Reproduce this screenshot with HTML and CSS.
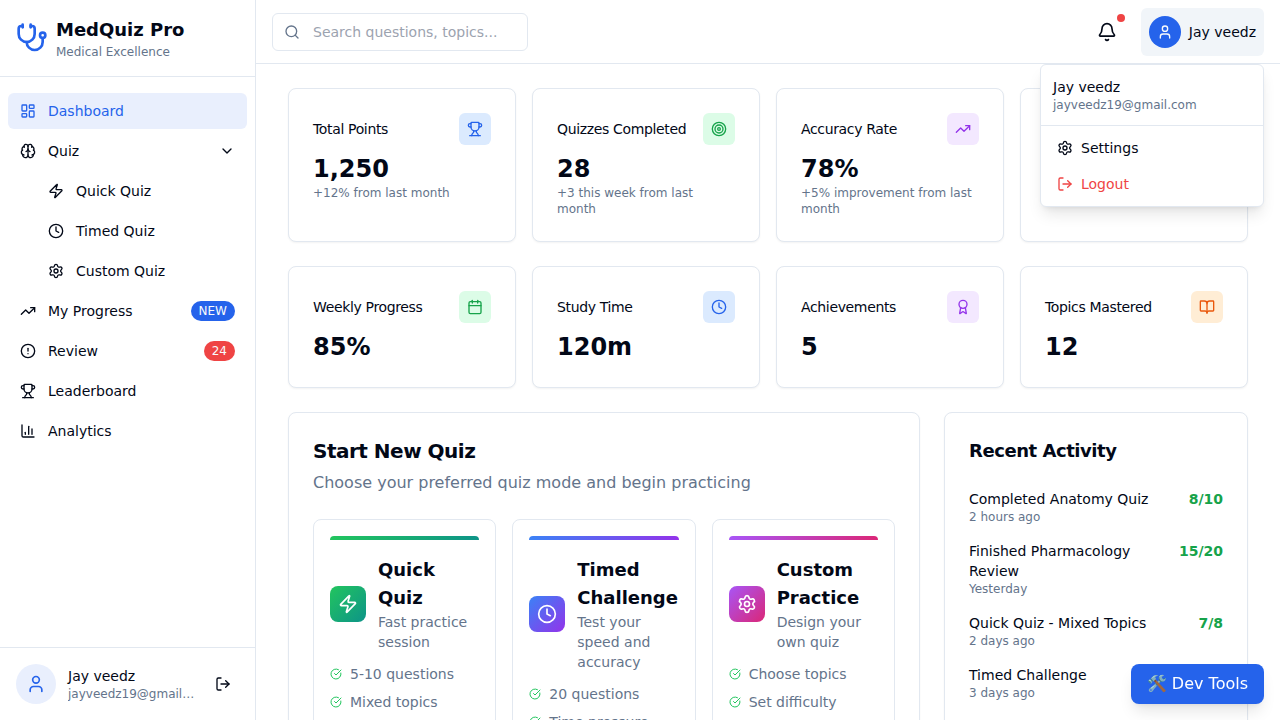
FILE: index.html
```html
<!DOCTYPE html>
<html lang="en">
<head>
<meta charset="utf-8">
<title>MedQuiz Pro</title>
<link rel="stylesheet" href="styles.css">
</head>
<body>
<svg class="sprite" aria-hidden="true">
  <symbol id="stethoscope" viewBox="0 0 24 24"><path d="M11 2v2"/><path d="M5 2v2"/><path d="M5 3H4a2 2 0 0 0-2 2v4a6 6 0 0 0 12 0V5a2 2 0 0 0-2-2h-1"/><path d="M8 15a6 6 0 0 0 12 0v-3"/><circle cx="20" cy="10" r="2"/></symbol>
  <symbol id="dashboard" viewBox="0 0 24 24"><rect width="7" height="9" x="3" y="3" rx="1"/><rect width="7" height="5" x="14" y="3" rx="1"/><rect width="7" height="9" x="14" y="12" rx="1"/><rect width="7" height="5" x="3" y="16" rx="1"/></symbol>
  <symbol id="brain" viewBox="0 0 24 24"><path d="M12 18V5"/><path d="M15 13a4.17 4.17 0 0 1-3-4 4.17 4.17 0 0 1-3 4"/><path d="M17.598 6.5A3 3 0 1 0 12 5a3 3 0 1 0-5.598 1.5"/><path d="M17.997 5.125a4 4 0 0 1 2.526 5.77"/><path d="M18 18a4 4 0 0 0 2-7.464"/><path d="M19.967 17.483A4 4 0 1 1 12 18a4 4 0 1 1-7.967-.517"/><path d="M6 18a4 4 0 0 1-2-7.464"/><path d="M6.003 5.125a4 4 0 0 0-2.526 5.77"/></symbol>
  <symbol id="chevron" viewBox="0 0 24 24"><path d="m6 9 6 6 6-6"/></symbol>
  <symbol id="zap" viewBox="0 0 24 24"><path d="M4 14a1 1 0 0 1-.78-1.63l9.9-10.2a.5.5 0 0 1 .86.46l-1.92 6.02A1 1 0 0 0 13 10h7a1 1 0 0 1 .78 1.63l-9.9 10.2a.5.5 0 0 1-.86-.46l1.92-6.02A1 1 0 0 0 11 14z"/></symbol>
  <symbol id="clock" viewBox="0 0 24 24"><path d="M12 6v6l4 2"/><circle cx="12" cy="12" r="10"/></symbol>
  <symbol id="settings" viewBox="0 0 24 24"><path d="M9.671 4.136a2.34 2.34 0 0 1 4.659 0 2.34 2.34 0 0 0 3.319 1.915 2.34 2.34 0 0 1 2.33 4.033 2.34 2.34 0 0 0 0 3.831 2.34 2.34 0 0 1-2.33 4.033 2.34 2.34 0 0 0-3.319 1.915 2.34 2.34 0 0 1-4.659 0 2.34 2.34 0 0 0-3.32-1.915 2.34 2.34 0 0 1-2.33-4.033 2.34 2.34 0 0 0 0-3.831A2.34 2.34 0 0 1 6.35 6.051a2.34 2.34 0 0 0 3.319-1.915"/><circle cx="12" cy="12" r="3"/></symbol>
  <symbol id="trending" viewBox="0 0 24 24"><path d="M16 7h6v6"/><path d="m22 7-8.5 8.5-5-5L2 17"/></symbol>
  <symbol id="alert" viewBox="0 0 24 24"><circle cx="12" cy="12" r="10"/><path d="M12 8v4"/><path d="M12 16h.01"/></symbol>
  <symbol id="trophy" viewBox="0 0 24 24"><path d="M10 14.66v1.626a2 2 0 0 1-.976 1.696A5 5 0 0 0 7 21.978"/><path d="M14 14.66v1.626a2 2 0 0 0 .976 1.696A5 5 0 0 1 17 21.978"/><path d="M18 9h1.5a1 1 0 0 0 0-5H18"/><path d="M4 22h16"/><path d="M6 9a6 6 0 0 0 12 0V3a1 1 0 0 0-1-1H7a1 1 0 0 0-1 1z"/><path d="M6 9H4.5a1 1 0 0 1 0-5H6"/></symbol>
  <symbol id="chart" viewBox="0 0 24 24"><path d="M3 3v16a2 2 0 0 0 2 2h16"/><path d="M18 17V9"/><path d="M13 17V5"/><path d="M8 17v-3"/></symbol>
  <symbol id="user" viewBox="0 0 24 24"><path d="M19 21v-2a4 4 0 0 0-4-4H9a4 4 0 0 0-4 4v2"/><circle cx="12" cy="7" r="4"/></symbol>
  <symbol id="logout" viewBox="0 0 24 24"><path d="m16 17 5-5-5-5"/><path d="M21 12H9"/><path d="M9 21H5a2 2 0 0 1-2-2V5a2 2 0 0 1 2-2h4"/></symbol>
  <symbol id="search" viewBox="0 0 24 24"><path d="m21 21-4.34-4.34"/><circle cx="11" cy="11" r="8"/></symbol>
  <symbol id="bell" viewBox="0 0 24 24"><path d="M10.268 21a2 2 0 0 0 3.464 0"/><path d="M3.262 15.326A1 1 0 0 0 4 17h16a1 1 0 0 0 .74-1.673C19.41 13.956 18 12.499 18 8A6 6 0 0 0 6 8c0 4.499-1.411 5.956-2.738 7.326"/></symbol>
  <symbol id="target" viewBox="0 0 24 24"><circle cx="12" cy="12" r="10"/><circle cx="12" cy="12" r="6"/><circle cx="12" cy="12" r="2"/></symbol>
  <symbol id="calendar" viewBox="0 0 24 24"><path d="M8 2v4"/><path d="M16 2v4"/><rect width="18" height="18" x="3" y="4" rx="2"/><path d="M3 10h18"/></symbol>
  <symbol id="award" viewBox="0 0 24 24"><path d="m15.477 12.89 1.515 8.526a.5.5 0 0 1-.81.47l-3.58-2.687a1 1 0 0 0-1.197 0l-3.586 2.686a.5.5 0 0 1-.81-.469l1.514-8.526"/><circle cx="12" cy="8" r="6"/></symbol>
  <symbol id="book" viewBox="0 0 24 24"><path d="M12 7v14"/><path d="M3 18a1 1 0 0 1-1-1V4a1 1 0 0 1 1-1h5a4 4 0 0 1 4 4 4 4 0 0 1 4-4h5a1 1 0 0 1 1 1v13a1 1 0 0 1-1 1h-6a3 3 0 0 0-3 3 3 3 0 0 0-3-3z"/></symbol>
  <symbol id="check" viewBox="0 0 24 24"><path d="M21.801 10A10 10 0 1 1 17 3.335"/><path d="m9 11 3 3L22 4"/></symbol>
</svg>

<div class="app">
  <aside class="sidebar">
    <div class="brand">
      <svg class="icon icon-32"><use href="#stethoscope"/></svg>
      <div>
        <div class="brand-name">MedQuiz Pro</div>
        <div class="small muted">Medical Excellence</div>
      </div>
    </div>
    <nav class="nav">
      <a class="nav-item active"><svg class="icon"><use href="#dashboard"/></svg><span>Dashboard</span></a>
      <a class="nav-item"><svg class="icon"><use href="#brain"/></svg><span>Quiz</span><svg class="icon push"><use href="#chevron"/></svg></a>
      <a class="nav-item sub"><svg class="icon"><use href="#zap"/></svg><span>Quick Quiz</span></a>
      <a class="nav-item sub"><svg class="icon"><use href="#clock"/></svg><span>Timed Quiz</span></a>
      <a class="nav-item sub"><svg class="icon"><use href="#settings"/></svg><span>Custom Quiz</span></a>
      <a class="nav-item"><svg class="icon"><use href="#trending"/></svg><span>My Progress</span><span class="badge push">NEW</span></a>
      <a class="nav-item"><svg class="icon"><use href="#alert"/></svg><span>Review</span><span class="badge badge-red push">24</span></a>
      <a class="nav-item"><svg class="icon"><use href="#trophy"/></svg><span>Leaderboard</span></a>
      <a class="nav-item"><svg class="icon"><use href="#chart"/></svg><span>Analytics</span></a>
    </nav>
    <div class="account">
      <div class="avatar avatar-lg"><svg class="icon icon-20"><use href="#user"/></svg></div>
      <div class="account-text">
        <div>Jay veedz</div>
        <div class="small muted truncate">jayveedz19@gmail.com</div>
      </div>
      <div class="icon-button"><svg class="icon"><use href="#logout"/></svg></div>
    </div>
  </aside>

  <div class="page">
    <header class="topbar">
      <div class="search"><svg class="icon"><use href="#search"/></svg><input type="text" placeholder="Search questions, topics..."></div>
      <div class="actions">
        <div class="icon-button bell"><svg class="icon icon-20"><use href="#bell"/></svg><span class="dot"></span></div>
        <div class="profile">
          <div class="avatar"><svg class="icon"><use href="#user"/></svg></div>
          <span>Jay veedz</span>
          <div class="menu">
            <div class="menu-head">
              <div>Jay veedz</div>
              <div class="small muted">jayveedz19@gmail.com</div>
            </div>
            <div class="menu-list">
              <div class="menu-item"><svg class="icon"><use href="#settings"/></svg>Settings</div>
              <div class="menu-item danger"><svg class="icon"><use href="#logout"/></svg>Logout</div>
            </div>
          </div>
        </div>
      </div>
    </header>

    <main class="content">
      <section class="stats">
        <div class="card"><div class="stat-head">Total Points<div class="tile blue"><svg class="icon"><use href="#trophy"/></svg></div></div><div class="value">1,250</div><div class="small muted">+12% from last month</div></div>
        <div class="card"><div class="stat-head">Quizzes Completed<div class="tile green"><svg class="icon"><use href="#target"/></svg></div></div><div class="value">28</div><div class="small muted">+3 this week from last month</div></div>
        <div class="card"><div class="stat-head">Accuracy Rate<div class="tile purple"><svg class="icon"><use href="#trending"/></svg></div></div><div class="value">78%</div><div class="small muted">+5% improvement from last month</div></div>
        <div class="card"></div>
      </section>

      <section class="stats">
        <div class="card"><div class="stat-head">Weekly Progress<div class="tile green"><svg class="icon"><use href="#calendar"/></svg></div></div><div class="value">85%</div></div>
        <div class="card"><div class="stat-head">Study Time<div class="tile blue"><svg class="icon"><use href="#clock"/></svg></div></div><div class="value">120m</div></div>
        <div class="card"><div class="stat-head">Achievements<div class="tile purple"><svg class="icon"><use href="#award"/></svg></div></div><div class="value">5</div></div>
        <div class="card"><div class="stat-head">Topics Mastered<div class="tile orange"><svg class="icon"><use href="#book"/></svg></div></div><div class="value">12</div></div>
      </section>

      <section class="columns">
        <div class="card quiz-panel">
          <h2 class="panel-title">Start New Quiz</h2>
          <p class="panel-text">Choose your preferred quiz mode and begin practicing</p>
          <div class="modes">
            <div class="mode quick">
              <div class="mode-bar"></div>
              <div class="mode-head">
                <div class="mode-icon"><svg class="icon icon-20"><use href="#zap"/></svg></div>
                <div><h3 class="mode-title">Quick Quiz</h3><p class="muted">Fast practice session</p></div>
              </div>
              <ul class="features">
                <li><svg class="icon icon-12"><use href="#check"/></svg>5-10 questions</li>
                <li><svg class="icon icon-12"><use href="#check"/></svg>Mixed topics</li>
              </ul>
            </div>
            <div class="mode timed">
              <div class="mode-bar"></div>
              <div class="mode-head">
                <div class="mode-icon"><svg class="icon icon-20"><use href="#clock"/></svg></div>
                <div><h3 class="mode-title">Timed Challenge</h3><p class="muted">Test your speed and accuracy</p></div>
              </div>
              <ul class="features">
                <li><svg class="icon icon-12"><use href="#check"/></svg>20 questions</li>
                <li><svg class="icon icon-12"><use href="#check"/></svg>Time pressure</li>
              </ul>
            </div>
            <div class="mode custom">
              <div class="mode-bar"></div>
              <div class="mode-head">
                <div class="mode-icon"><svg class="icon icon-20"><use href="#settings"/></svg></div>
                <div><h3 class="mode-title">Custom Practice</h3><p class="muted">Design your own quiz</p></div>
              </div>
              <ul class="features">
                <li><svg class="icon icon-12"><use href="#check"/></svg>Choose topics</li>
                <li><svg class="icon icon-12"><use href="#check"/></svg>Set difficulty</li>
              </ul>
            </div>
          </div>
        </div>

        <div class="card">
          <h2 class="panel-title activity-title">Recent Activity</h2>
          <div class="activity">
            <div class="activity-row"><div><div>Completed Anatomy Quiz</div><div class="small muted">2 hours ago</div></div><span class="score">8/10</span></div>
            <div class="activity-row"><div><div>Finished Pharmacology Review</div><div class="small muted">Yesterday</div></div><span class="score">15/20</span></div>
            <div class="activity-row"><div><div>Quick Quiz - Mixed Topics</div><div class="small muted">2 days ago</div></div><span class="score">7/8</span></div>
            <div class="activity-row"><div><div>Timed Challenge</div><div class="small muted">3 days ago</div></div></div>
          </div>
        </div>
      </section>
    </main>
  </div>
</div>
<button class="dev-tools">🛠️ Dev Tools</button>
</body>
</html>
```

FILE: styles.css
```css
* { box-sizing: border-box; margin: 0; padding: 0; }

body {
  height: 100vh;
  overflow: hidden;
  font: 14px/20px "DejaVu Sans", sans-serif;
  color: #020817;
  background: #fff;
}

.sprite { display: none; }

.icon {
  display: block;
  flex: none;
  width: 16px;
  height: 16px;
  fill: none;
  stroke: currentColor;
  stroke-width: 2;
  stroke-linecap: round;
  stroke-linejoin: round;
}
.icon-12 { width: 12px; height: 12px; }
.icon-20 { width: 20px; height: 20px; }
.icon-32 { width: 32px; height: 32px; }

.small { font-size: 12px; line-height: 16px; }
.muted { color: #64748b; }
.truncate { overflow: hidden; text-overflow: ellipsis; white-space: nowrap; }
.push { margin-left: auto; }

.app { display: flex; height: 100vh; }

/* Sidebar */
.sidebar {
  display: flex;
  flex-direction: column;
  flex: none;
  width: 256px;
  border-right: 1px solid #e2e8f0;
}
.brand {
  display: flex;
  align-items: center;
  gap: 8px;
  padding: 16px;
  border-bottom: 1px solid #e2e8f0;
}
.brand .icon { color: #2563eb; }
.brand-name { font-size: 18px; line-height: 28px; font-weight: 700; }

.nav {
  display: flex;
  flex: 1;
  flex-direction: column;
  gap: 4px;
  padding: 16px 8px;
}
.nav-item {
  display: flex;
  align-items: center;
  gap: 12px;
  height: 36px;
  padding: 0 12px;
  border-radius: 6px;
}
.nav-item.sub { padding-left: 40px; }
.nav-item.active { color: #2563eb; background: #e9effd; }

.badge {
  padding: 2px 8px;
  border-radius: 10px;
  font-size: 12px;
  line-height: 16px;
  color: #f8fafc;
  background: #2563eb;
}
.badge-red { background: #ef4444; }

.account {
  display: flex;
  align-items: center;
  gap: 12px;
  padding: 16px;
  border-top: 1px solid #e2e8f0;
}
.account-text { flex: 1; min-width: 0; }
.icon-button { padding: 8px; }

.avatar {
  display: flex;
  flex: none;
  align-items: center;
  justify-content: center;
  width: 32px;
  height: 32px;
  border-radius: 50%;
  color: #f8fafc;
  background: #2563eb;
}
.avatar-lg { width: 40px; height: 40px; color: #2563eb; background: #e9effd; }

/* Top bar */
.page { display: flex; flex: 1; flex-direction: column; min-width: 0; }
.topbar {
  display: flex;
  flex: none;
  align-items: center;
  justify-content: space-between;
  height: 64px;
  padding: 0 16px;
  border-bottom: 1px solid #e2e8f0;
}
.search {
  display: flex;
  align-items: center;
  gap: 13px;
  width: 256px;
  height: 38px;
  padding: 0 11px;
  border: 1px solid #e2e8f0;
  border-radius: 6px;
  color: #64748b;
}
.search input {
  flex: 1;
  min-width: 0;
  border: 0;
  outline: 0;
  font: inherit;
  background: transparent;
}
.search input::placeholder { color: #9ca3af; }

.actions { display: flex; align-items: center; gap: 16px; }
.bell { position: relative; }
.dot {
  position: absolute;
  top: 0;
  right: 0;
  width: 8px;
  height: 8px;
  border-radius: 50%;
  background: #ef4444;
}
.profile {
  position: relative;
  display: flex;
  align-items: center;
  gap: 8px;
  padding: 8px;
  border-radius: 6px;
  background: #f1f5f9;
}
.menu {
  position: absolute;
  z-index: 10;
  top: 100%;
  right: 0;
  width: 224px;
  margin-top: 8px;
  border: 1px solid #e2e8f0;
  border-radius: 6px;
  background: #fff;
  box-shadow: 0 10px 15px -3px rgb(0 0 0 / 0.1), 0 4px 6px -4px rgb(0 0 0 / 0.1);
}
.menu-head { padding: 12px; border-bottom: 1px solid #e2e8f0; }
.menu-list { padding: 4px; }
.menu-item { display: flex; align-items: center; gap: 8px; padding: 8px 12px; }
.danger { color: #ef4444; }

/* Dashboard */
.content {
  display: flex;
  flex: 1;
  flex-direction: column;
  gap: 24px;
  min-height: 0;
  padding: 24px 32px;
  overflow: hidden;
}
.card {
  padding: 24px;
  border: 1px solid #e2e8f0;
  border-radius: 8px;
  background: #fff;
  box-shadow: 0 1px 2px rgb(0 0 0 / 0.05);
}
.stats { display: grid; flex: none; grid-template-columns: repeat(4, 1fr); gap: 16px; }
.stat-head {
  display: flex;
  align-items: center;
  justify-content: space-between;
  margin-bottom: 8px;
  letter-spacing: -0.025em;
}
.value { font-size: 24px; line-height: 32px; font-weight: 700; }
.tile { padding: 8px; border-radius: 6px; }
.blue { color: #2563eb; background: #dbeafe; }
.green { color: #16a34a; background: #dcfce7; }
.purple { color: #9333ea; background: #f3e8ff; }
.orange { color: #ea580c; background: #ffedd5; }

.columns { display: grid; flex: none; grid-template-columns: repeat(3, 1fr); gap: 24px; }
.quiz-panel { grid-column: span 2; }
.panel-title { font-size: 20px; line-height: 28px; font-weight: 700; letter-spacing: -0.025em; }
.activity-title { font-size: 18px; }
.panel-text { margin-top: 6px; font-size: 16px; line-height: 24px; color: #64748b; }

.modes { display: grid; grid-template-columns: repeat(3, 1fr); gap: 16px; margin-top: 24px; }
.mode { padding: 16px; border: 1px solid #e2e8f0; border-radius: 8px; }
.mode-bar { height: 4px; margin-bottom: 16px; border-radius: 4px 4px 0 0; }
.mode-head { display: flex; align-items: center; gap: 12px; margin-bottom: 12px; }
.mode-icon { padding: 8px; border-radius: 8px; color: #fff; }
.mode-title { font-size: 18px; line-height: 28px; font-weight: 700; }
.quick .mode-bar { background: linear-gradient(to right, #22c55e, #0d9488); }
.quick .mode-icon { background: linear-gradient(to bottom right, #22c55e, #0d9488); }
.timed .mode-bar { background: linear-gradient(to right, #3b82f6, #9333ea); }
.timed .mode-icon { background: linear-gradient(to bottom right, #3b82f6, #9333ea); }
.custom .mode-bar { background: linear-gradient(to right, #a855f7, #db2777); }
.custom .mode-icon { background: linear-gradient(to bottom right, #a855f7, #db2777); }

.features { display: flex; flex-direction: column; gap: 8px; list-style: none; color: #64748b; }
.features li { display: flex; align-items: center; gap: 8px; }
.features .icon { color: #22c55e; }

.activity { display: flex; flex-direction: column; gap: 16px; margin-top: 24px; }
.activity-row { display: flex; align-items: flex-start; justify-content: space-between; gap: 12px; }
.score { font-weight: 700; color: #16a34a; }

.dev-tools {
  position: fixed;
  right: 16px;
  bottom: 16px;
  padding: 8px 16px;
  border: 0;
  border-radius: 8px;
  font: 16px/24px "DejaVu Sans", sans-serif;
  color: #fff;
  background: #2563eb;
  box-shadow: 0 10px 15px -3px rgb(0 0 0 / 0.1), 0 4px 6px -4px rgb(0 0 0 / 0.1);
}
```
